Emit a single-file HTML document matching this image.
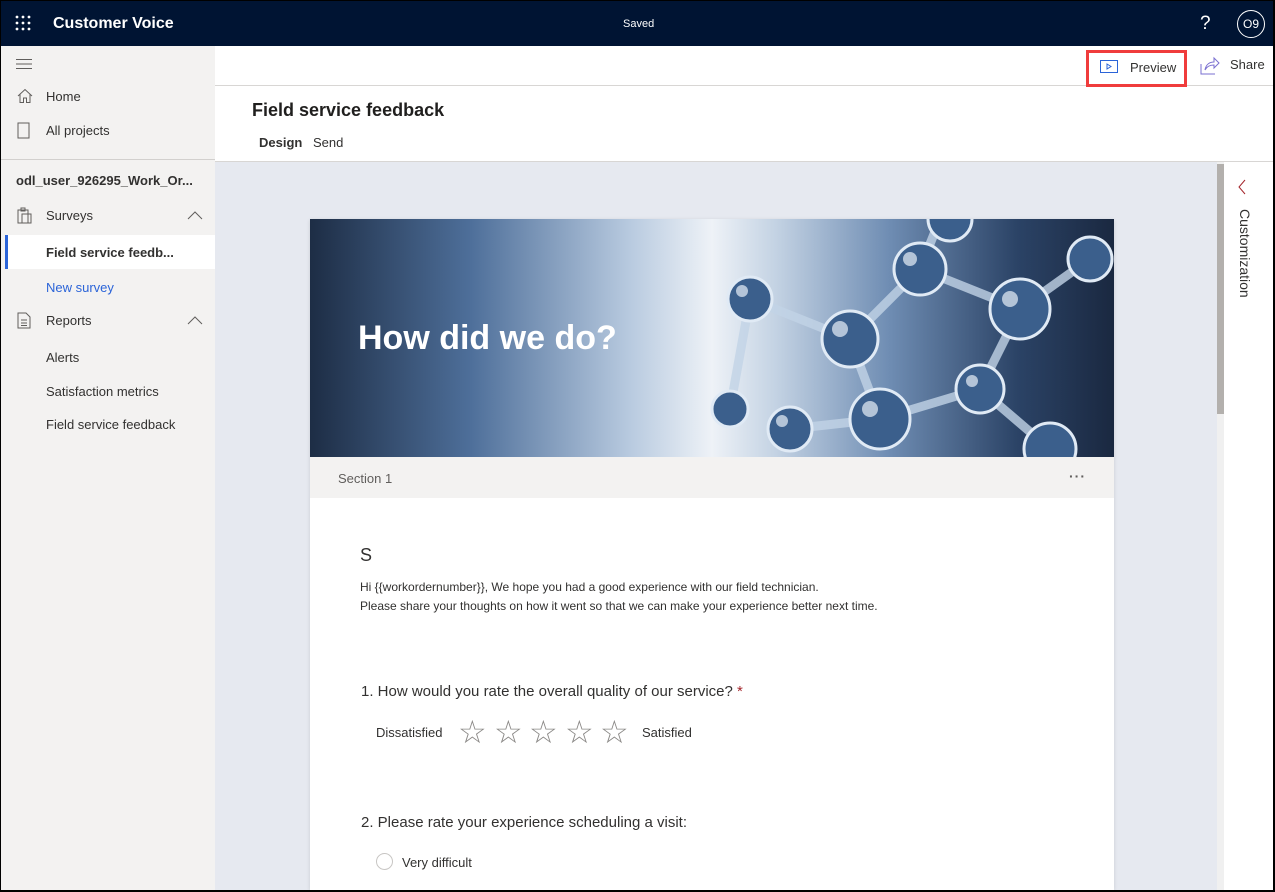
<!DOCTYPE html>
<html><head><meta charset="utf-8"><style>
*{box-sizing:border-box;margin:0;padding:0}
body{width:1275px;height:892px;overflow:hidden;font-family:"Liberation Sans",sans-serif;background:#000;position:relative;color:#323130}
.a{position:absolute}
.st{position:absolute;top:0}
</style></head><body>
<div class="a" style="left:1px;top:1px;width:1272px;height:889px;background:#fff;overflow:hidden">
<div class="a" style="left:0;top:0;width:1272px;height:45px;background:#001433;color:#fff">
 <svg class="a" style="left:14px;top:14px" width="16" height="16" fill="#fff"><circle cx="2" cy="2" r="1.4"/><circle cx="8" cy="2" r="1.4"/><circle cx="14" cy="2" r="1.4"/><circle cx="2" cy="8" r="1.4"/><circle cx="8" cy="8" r="1.4"/><circle cx="14" cy="8" r="1.4"/><circle cx="2" cy="14" r="1.4"/><circle cx="8" cy="14" r="1.4"/><circle cx="14" cy="14" r="1.4"/></svg>
 <div class="a" style="left:52px;top:14px;font-size:16px;font-weight:bold">Customer Voice</div>
 <div class="a" style="left:622px;top:17px;font-size:11px">Saved</div>
 <div class="a" style="left:1199px;top:12px;font-size:19px">?</div>
 <div class="a" style="left:1236px;top:9px;width:28px;height:28px;border:1px solid #fff;border-radius:50%;font-size:12px;text-align:center;line-height:26px">O9</div>
</div>
<div class="a" style="left:0;top:45px;width:214px;height:844px;background:#f3f2f1;font-size:13px">
 <svg class="a" style="left:15px;top:12px" width="16" height="12" stroke="#605e5c"><path d="M0 1.5H16M0 6H16M0 10.5H16"/></svg>
 <svg class="a" style="left:16px;top:42px" width="16" height="16" fill="none" stroke="#605e5c"><path d="M1 8L8 1.5L15 8M3 6.5V14.5H6.5V10H9.5V14.5H13V6.5"/></svg>
 <div class="a" style="left:45px;top:43px">Home</div>
 <svg class="a" style="left:16px;top:76px" width="14" height="18" fill="none" stroke="#605e5c"><rect x="1" y="1" width="11" height="15"/></svg>
 <div class="a" style="left:45px;top:77px">All projects</div>
 <div class="a" style="left:0;top:113px;width:214px;border-top:1px solid #d2d0ce"></div>
 <div class="a" style="left:15px;top:127px;font-weight:bold;color:#323130">odl_user_926295_Work_Or...</div>
 <svg class="a" style="left:16px;top:161px" width="16" height="17" fill="none" stroke="#605e5c"><rect x="1" y="3" width="10" height="13"/><rect x="5" y="7" width="9" height="9"/><rect x="4" y="1" width="4" height="3"/></svg>
 <div class="a" style="left:45px;top:162px">Surveys</div>
 <svg class="a" style="left:186px;top:165px" width="16" height="9" fill="none" stroke="#605e5c"><path d="M1 8L8 1L15 8"/></svg>
 <div class="a" style="left:4px;top:189px;width:210px;height:34px;background:#fff;border-left:3px solid #2b64d8"></div>
 <div class="a" style="left:45px;top:199px;font-weight:bold">Field service feedb...</div>
 <div class="a" style="left:45px;top:234px;color:#2b64d8">New survey</div>
 <svg class="a" style="left:16px;top:266px" width="14" height="17" fill="none" stroke="#605e5c"><path d="M1 1H9L13 5V16H1Z M4 8H10M4 11H10M4 13.5H10"/></svg>
 <div class="a" style="left:45px;top:267px">Reports</div>
 <svg class="a" style="left:186px;top:270px" width="16" height="9" fill="none" stroke="#605e5c"><path d="M1 8L8 1L15 8"/></svg>
 <div class="a" style="left:45px;top:304px">Alerts</div>
 <div class="a" style="left:45px;top:338px">Satisfaction metrics</div>
 <div class="a" style="left:45px;top:371px">Field service feedback</div>
</div>
<div class="a" style="left:214px;top:84px;width:1058px;border-top:1px solid #d8d6d4"></div>
<div class="a" style="left:1085px;top:49px;width:101px;height:37px;border:3px solid #f03c3c"></div>
<svg class="a" style="left:1099px;top:59px" width="18" height="14" fill="none" stroke="#2b64d8"><rect x="0.5" y="0.5" width="17" height="12"/><path d="M7 4L11 6.5L7 9Z"/></svg>
<div class="a" style="left:1129px;top:59px;font-size:13px">Preview</div>
<svg class="a" style="left:1199px;top:55px" width="20" height="19" fill="none" stroke="#7a6fd0"><path d="M1 8V18H15M5 14C6 8 10 6 14 6V2L19 7L14 12V9C10 9 7 10 5 14Z"/></svg>
<div class="a" style="left:1229px;top:56px;font-size:13px">Share</div>
<div class="a" style="left:251px;top:99px;font-size:18px;font-weight:bold;color:#201f1e">Field service feedback</div>
<div class="a" style="left:258px;top:134px;font-size:13px;font-weight:bold">Design</div>
<div class="a" style="left:312px;top:134px;font-size:13px">Send</div>
<div class="a" style="left:214px;top:160px;width:1058px;border-top:1px solid #d8d6d4"></div>
<div class="a" style="left:214px;top:161px;width:1002px;height:728px;background:#e6e9f0"></div>
<div class="a" style="left:1216px;top:161px;width:7px;height:728px;background:#f0f0f0"></div>
<div class="a" style="left:1216px;top:163px;width:7px;height:250px;background:#b3b0ad"></div>
<div class="a" style="left:1223px;top:161px;width:49px;height:728px;background:#fff"></div>
<svg class="a" style="left:1236px;top:178px" width="10" height="16" fill="none" stroke="#a4262c"><path d="M8 1L2 8L8 15"/></svg>
<div class="a" style="left:1236px;top:208px;font-size:14px;writing-mode:vertical-rl;color:#323130">Customization</div>
<div class="a" style="left:309px;top:218px;width:804px;height:671px;background:#fff;box-shadow:0 1px 4px rgba(0,0,0,.12)">
 <div class="a" style="left:0;top:0;width:804px;height:238px;overflow:hidden;background:linear-gradient(90deg,#1d2d45 0%,#4e6f9a 20%,#b9cbe0 40%,#eef2f7 50%,#c3d2e3 58%,#6f8db3 72%,#2b4366 88%,#1a2840 100%)">
  <svg class="a" style="left:380px;top:0" width="424" height="238">
   <g fill="none" stroke="#c2d3e6" stroke-width="9" opacity=".8"><path d="M60 80L160 120L230 50L330 90L400 40M160 120L190 200L290 170L360 230M230 50L250 0M290 170L330 90M190 200L100 210M60 80L40 190"/></g>
   <g fill="#3b5f8c" stroke="#e0eaf5" stroke-width="3"><circle cx="60" cy="80" r="22"/><circle cx="160" cy="120" r="28"/><circle cx="230" cy="50" r="26"/><circle cx="330" cy="90" r="30"/><circle cx="400" cy="40" r="22"/><circle cx="190" cy="200" r="30"/><circle cx="290" cy="170" r="24"/><circle cx="100" cy="210" r="22"/><circle cx="40" cy="190" r="18"/><circle cx="360" cy="230" r="26"/><circle cx="260" cy="0" r="22"/></g>
   <g fill="#e8f0f8" opacity=".7"><circle cx="52" cy="72" r="6"/><circle cx="150" cy="110" r="8"/><circle cx="220" cy="40" r="7"/><circle cx="320" cy="80" r="8"/><circle cx="180" cy="190" r="8"/><circle cx="282" cy="162" r="6"/><circle cx="92" cy="202" r="6"/></g>
  </svg>
  <div class="a" style="left:48px;top:100px;font-size:34px;font-weight:bold;color:#fff">How did we do?</div>
 </div>
 <div class="a" style="left:0;top:238px;width:804px;height:41px;background:#f3f2f1"></div>
 <div class="a" style="left:28px;top:252px;font-size:13px;color:#605e5c">Section 1</div>
 <div class="a" style="left:759px;top:249px;font-size:14px;font-weight:bold;color:#605e5c;letter-spacing:1px">···</div>
 <div class="a" style="left:50px;top:326px;font-size:18px">S</div>
 <div class="a" style="left:50px;top:359px;font-size:12px;line-height:19px">Hi {{workordernumber}}, We hope you had a good experience with our field technician.<br>Please share your thoughts on how it went so that we can make your experience better next time.</div>
 <div class="a" style="left:51px;top:464px;font-size:15px">1. How would you rate the overall quality of our service? <span style="color:#a4262c">*</span></div>
 <div class="a" style="left:66px;top:506px;font-size:13px">Dissatisfied</div>
 <div class="a" style="left:148px;top:496px;width:180px;height:34px;font-size:32px;color:#8a8886;line-height:34px">
  <span class="st" style="left:0">☆</span><span class="st" style="left:36px">☆</span><span class="st" style="left:71px">☆</span><span class="st" style="left:107px">☆</span><span class="st" style="left:142px">☆</span>
 </div>
 <div class="a" style="left:332px;top:506px;font-size:13px">Satisfied</div>
 <div class="a" style="left:51px;top:595px;font-size:15px">2. Please rate your experience scheduling a visit:</div>
 <div class="a" style="left:66px;top:634px;width:17px;height:17px;border:1px solid #c8c6c4;border-radius:50%"></div>
 <div class="a" style="left:92px;top:636px;font-size:13px">Very difficult</div>
</div>
</div>
</body></html>
